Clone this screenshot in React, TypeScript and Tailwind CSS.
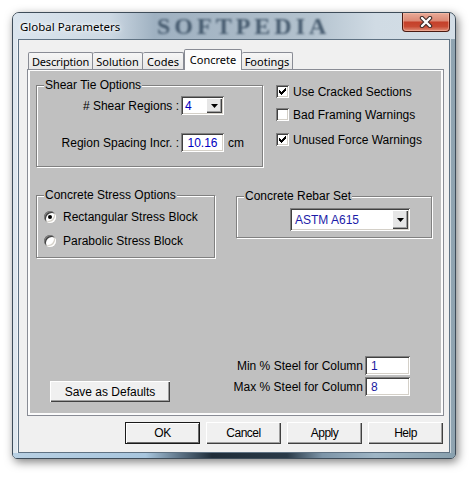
import React from "react";

const SUNKEN =
  "shadow-[inset_1px_1px_0_#808080,inset_-1px_-1px_0_#ffffff,inset_2px_2px_0_#404040,inset_-2px_-2px_0_#d4d0c8]";
const RAISED =
  "shadow-[inset_1px_1px_0_#ffffff,inset_-1px_-1px_0_#404040,inset_-2px_-2px_0_#a0a0a0]";
const ETCHED =
  "border border-[#808080] shadow-[1px_1px_0_#ffffff,inset_1px_1px_0_#ffffff]";

function Arrow() {
  return (
    <svg width="7" height="4" viewBox="0 0 7 4">
      <polygon points="0,0 7,0 3.5,4" fill="#000" />
    </svg>
  );
}

function Combo({
  value,
  className,
  textClass,
}: {
  value: string;
  className: string;
  textClass: string;
}) {
  return (
    <div className={`flex bg-white p-[2px] ${SUNKEN} ${className}`}>
      <div className={`flex-1 flex items-center ${textClass}`}>{value}</div>
      <div
        className={`w-[16px] h-full flex items-center justify-center bg-[#e6e6e6] ${RAISED}`}
      >
        <Arrow />
      </div>
    </div>
  );
}

function Check({ checked }: { checked: boolean }) {
  return (
    <span className={`w-[13px] h-[13px] shrink-0 bg-white ${SUNKEN}`}>
      {checked && (
        <svg width="13" height="13" viewBox="0 0 13 13" shapeRendering="crispEdges">
          <rect x="9" y="3" width="1" height="1" fill="#000" />
          <rect x="8" y="4" width="2" height="1" fill="#000" />
          <rect x="3" y="5" width="1" height="1" fill="#000" />
          <rect x="7" y="5" width="3" height="1" fill="#000" />
          <rect x="3" y="6" width="2" height="1" fill="#000" />
          <rect x="6" y="6" width="3" height="1" fill="#000" />
          <rect x="3" y="7" width="5" height="1" fill="#000" />
          <rect x="4" y="8" width="3" height="1" fill="#000" />
          <rect x="5" y="9" width="1" height="1" fill="#000" />
        </svg>
      )}
    </span>
  );
}

function Radio({ checked }: { checked: boolean }) {
  return (
    <span className="w-[12px] h-[12px] shrink-0 rounded-full bg-white flex items-center justify-center shadow-[inset_1px_1px_0_#808080,inset_-1px_-1px_0_#ffffff,inset_2px_2px_0_#404040,inset_-2px_-2px_0_#d4d0c8]">
      {checked && <span className="w-[4px] h-[4px] rounded-full bg-black" />}
    </span>
  );
}

function GroupBox({
  label,
  className,
  children,
}: {
  label: string;
  className: string;
  children?: React.ReactNode;
}) {
  return (
    <div className={`relative ${ETCHED} ${className}`}>
      <span className="absolute -top-[8px] left-[7px] bg-[#c0c0c0] px-[1px] leading-[14px] whitespace-nowrap">
        {label}
      </span>
      {children}
    </div>
  );
}

export default function App() {
  return (
    <div className="w-[476px] h-[480px] bg-white pt-[12px] pl-[12px] overflow-hidden">
      <div className="relative w-[444px] h-[447px] rounded-t-[7px] rounded-b-[5px] border border-[#3e4c59] bg-[linear-gradient(to_right,#dfe7ee,#c9d5df_50%,#8fa3b0)] shadow-[2px_3px_10px_rgba(0,0,0,0.5)] flex flex-col overflow-hidden">
        {/* title bar */}
        <div className="relative h-[26px] shrink-0 flex items-start bg-[linear-gradient(to_right,#dbe5ee_0%,#ccd8e3_22%,#9fb1c1_32%,#a8b8c6_50%,#b4c3cf_68%,#d0dbe4_82%,#d3dde6_100%)]">
          <span className="absolute left-[144px] top-[1px] h-[25px] font-['Liberation_Serif',serif] font-bold text-[24px] leading-[25px] tracking-[4px] text-[#3d5266] opacity-90 blur-[1px] select-none">
            SOFTPEDIA
          </span>
          <span className="relative mt-[6px] ml-[7px] font-['Noto_Sans',sans-serif] text-[11.5px] leading-[16px] text-black [text-shadow:0_0_6px_#ffffff,0_0_3px_#ffffff]">
            Global Parameters
          </span>
          <div className="relative ml-auto mr-[5px] w-[48px] h-[19px] rounded-b-[4px] border border-t-0 border-[#4a1a12] bg-[linear-gradient(to_bottom,#e9ab98_0%,#dc8a76_42%,#c5402a_52%,#c84a33_75%,#e0907a_100%)] flex items-center justify-center shadow-[inset_0_0_0_1px_rgba(255,200,180,0.45)]">
            <svg width="14" height="12" viewBox="0 0 14 12">
              <path d="M3 2 L11 10 M11 2 L3 10" stroke="#3b2a28" strokeWidth="4.4" strokeLinecap="round" />
              <path d="M3 2 L11 10 M11 2 L3 10" stroke="#ffffff" strokeWidth="2.4" strokeLinecap="round" />
            </svg>
          </div>
        </div>

        {/* client area */}
        <div className="ml-[5px] w-[432px] h-[414px] shrink-0 border border-[#5f7283] bg-[#f0f0f0] flex flex-col shadow-[0_0_0_1px_rgba(255,255,255,0.55)]">
          {/* tabs */}
          <div className="ml-[9px] mt-[9px] h-[21px] flex items-end font-['Noto_Sans',sans-serif] text-[11px] text-black">
            <div className="w-[65px] h-[18px] border border-b-0 border-[#898c95] rounded-t-[2px] bg-[linear-gradient(to_bottom,#f6f6f6,#e6e6e6)] flex items-center justify-center leading-none pb-[1px] tracking-[-0.2px]">
              Description
            </div>
            <div className="w-[50px] h-[18px] border border-b-0 border-l-0 border-[#898c95] rounded-t-[2px] bg-[linear-gradient(to_bottom,#f6f6f6,#e6e6e6)] flex items-center justify-center leading-none pb-[1px]">
              Solution
            </div>
            <div className="w-[41px] h-[18px] border border-b-0 border-l-0 border-[#898c95] rounded-t-[2px] bg-[linear-gradient(to_bottom,#f6f6f6,#e6e6e6)] flex items-center justify-center leading-none pb-[1px]">
              Codes
            </div>
            <div className="relative z-10 w-[58px] h-[21px] border border-b-0 border-[#898c95] rounded-t-[2px] bg-[#fcfcfc] flex items-center justify-center leading-none pb-[2px]">
              Concrete
            </div>
            <div className="w-[51px] h-[18px] border border-b-0 border-l-0 border-[#898c95] rounded-t-[2px] bg-[linear-gradient(to_bottom,#f6f6f6,#e6e6e6)] flex items-center justify-center leading-none pb-[1px]">
              Footings
            </div>
          </div>

          {/* tab panel frame */}
          <div className="-mt-[1px] ml-[8px] w-[417px] h-[347px] shrink-0 border border-[#898c95] bg-[#fcfcfc] pt-[1px] px-[2px] pb-[2px]">
            <div className="h-full bg-[#c0c0c0] flex flex-col pl-[6px] pt-[14px] font-['Liberation_Sans',Arial,sans-serif] text-[12px] leading-[14px] text-black">
              {/* row 1 */}
              <div className="flex items-start">
                <GroupBox label="Shear Tie Options" className="w-[227px] h-[82px] shrink-0 pt-[10px]">
                  <div className="flex flex-col gap-[18px]">
                    <div className="flex items-center h-[19px]">
                      <span className="w-[144px] text-right pr-[2px]"># Shear Regions :</span>
                      <Combo value="4" className="w-[43px] h-[19px]" textClass="pl-[2px] text-[#0000c0]" />
                    </div>
                    <div className="flex items-center h-[19px]">
                      <span className="w-[144px] text-right pr-[2px]">Region Spacing Incr. :</span>
                      <div className={`w-[43px] h-[19px] bg-white flex items-center justify-center text-[#0000c0] ${SUNKEN}`}>
                        10.16
                      </div>
                      <span className="ml-[4px]">cm</span>
                    </div>
                  </div>
                </GroupBox>

                <div className="ml-[13px] flex flex-col">
                  <label className="flex items-center h-[13px] gap-[4px]">
                    <Check checked />
                    <span>Use Cracked Sections</span>
                  </label>
                  <label className="flex items-center h-[13px] gap-[4px] mt-[10px]">
                    <Check checked={false} />
                    <span>Bad Framing Warnings</span>
                  </label>
                  <label className="flex items-center h-[13px] gap-[4px] mt-[12px]">
                    <Check checked />
                    <span>Unused Force Warnings</span>
                  </label>
                </div>
              </div>

              {/* row 2 */}
              <div className="flex items-start mt-[28px]">
                <GroupBox label="Concrete Stress Options" className="w-[179px] h-[63px] shrink-0 pt-[13px] pl-[7px]">
                  <div className="flex flex-col gap-[8px]">
                    <label className="flex items-center h-[16px] gap-[7px]">
                      <Radio checked />
                      <span>Rectangular Stress Block</span>
                    </label>
                    <label className="flex items-center h-[16px] gap-[7px]">
                      <Radio checked={false} />
                      <span>Parabolic Stress Block</span>
                    </label>
                  </div>
                </GroupBox>
                <GroupBox label="Concrete Rebar Set" className="ml-[21px] mt-[1px] w-[196px] h-[42px] shrink-0 pt-[11px] pl-[53px]">
                  <Combo value="ASTM A615" className="w-[120px] h-[23px]" textClass="pl-[3px] text-[#1c1ca8]" />
                </GroupBox>
              </div>

              {/* bottom row */}
              <div className="mt-auto flex items-end justify-between pb-[11px]">
                <button
                  className={`ml-[14px] w-[120px] h-[21px] bg-[#f0f0f0] text-black text-[12px] leading-none ${RAISED}`}
                >
                  Save as Defaults
                </button>
                <div className="mr-[31px] mb-[6px] flex flex-col gap-[2px]">
                  <div className="flex items-center justify-end gap-[2px]">
                    <span>Min % Steel for Column</span>
                    <div className={`w-[45px] h-[19px] bg-white flex items-center pl-[6px] text-[#1a1aa0] ${SUNKEN}`}>1</div>
                  </div>
                  <div className="flex items-center justify-end gap-[2px]">
                    <span>Max % Steel for Column</span>
                    <div className={`w-[45px] h-[19px] bg-white flex items-center pl-[6px] text-[#1a1aa0] ${SUNKEN}`}>8</div>
                  </div>
                </div>
              </div>
            </div>
          </div>

          {/* dialog buttons */}
          <div className="mt-[6px] flex justify-end gap-[6px] pr-[6px] font-['Liberation_Sans',Arial,sans-serif] text-[12px] tracking-[-0.5px] text-black">
            <button className="w-[75px] h-[22px] border border-[#1a1a1a] bg-[#f0f0f0] shadow-[inset_1px_1px_0_#ffffff,inset_-1px_-1px_0_#6a6a6a] leading-none">
              OK
            </button>
            <button className={`w-[75px] h-[22px] bg-[#f0f0f0] leading-none ${RAISED}`}>Cancel</button>
            <button className={`w-[75px] h-[22px] bg-[#f0f0f0] leading-none ${RAISED}`}>Apply</button>
            <button className={`w-[75px] h-[22px] bg-[#f0f0f0] leading-none ${RAISED}`}>Help</button>
          </div>
        </div>

        {/* bottom frame strip */}
        <div className="mt-auto h-[5px] bg-[linear-gradient(to_right,#b8d0e3_0%,#a8c6de_30%,#5b7184_38%,#1f2d39_45%,#2a3a48_62%,#7d95a8_70%,#9fb6c6_82%,#88a0ae_100%)]" />
      </div>
    </div>
  );
}
